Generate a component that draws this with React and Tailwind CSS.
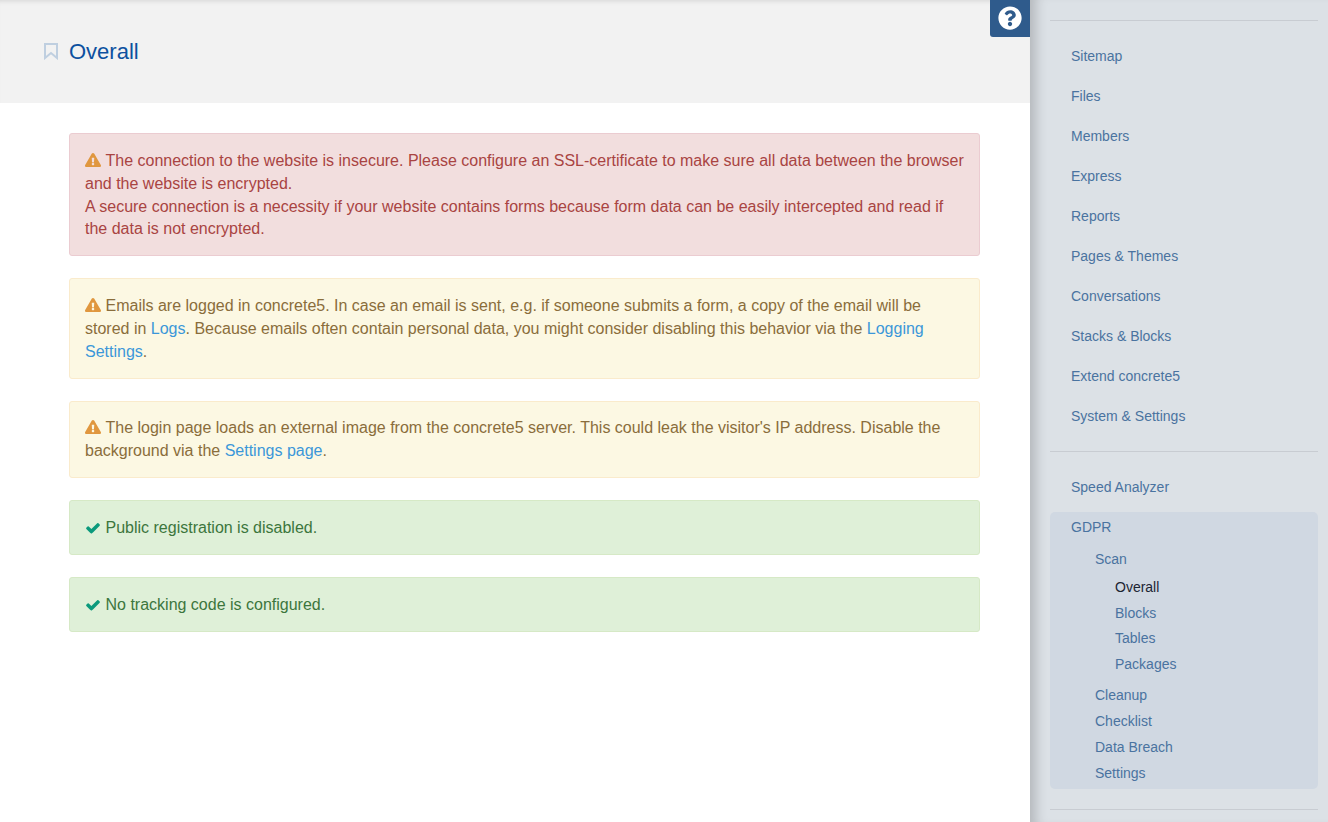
import React from "react";
import { FaExclamationTriangle, FaQuestionCircle } from "react-icons/fa";

const mainLinks = [
	"Sitemap",
	"Files",
	"Members",
	"Express",
	"Reports",
	"Pages & Themes",
	"Conversations",
	"Stacks & Blocks",
	"Extend concrete5",
	"System & Settings",
];

const linkClass = "text-[#4a73a0]";
const alertLink = "text-[#3b97d9]";

function Warn() {
	return <FaExclamationTriangle className="inline-block align-[-2px] text-[#e0973f] text-[16px] mr-[4.5px]" />;
}

function Check() {
	return (
		<svg width="16" height="16" viewBox="0 0 1792 1792" fill="#0b9a7c" className="inline-block align-[-3px] mr-[4.5px]">
			<path d="M1671 566q0 40-28 68l-724 724-136 136q-28 28-68 28t-68-28l-136-136-362-362q-28-28-28-68t28-68l136-136q28-28 68-28t68 28l294 295 656-657q28-28 68-28t68 28l136 136q28 28 28 68z" />
		</svg>
	);
}

function Alert({ classes, children }) {
	return <div className={`border rounded-[3px] pl-[15px] pr-[13px] pt-[15.8px] pb-[14.2px] mb-[21.8px] ${classes}`}>{children}</div>;
}

const danger = "bg-[#f2dede] border-[#ebccd1] text-[#a94442]";
const warning = "bg-[#fcf8e3] border-[#faebcc] text-[#8a6d3b]";
const success = "bg-[#dff0d8] border-[#d6e9c6] text-[#3c763d]";

export default function App() {
	return (
		<div className="relative flex h-[822px] overflow-hidden bg-white font-['Liberation_Sans',Arial,sans-serif]">
			<div className="w-[1030px] shrink-0">
				<div className="flex items-center h-[103px] bg-[#f2f2f2] pl-[44px] shadow-[inset_0_5px_5px_-4px_rgba(0,0,0,0.12)]">
					<svg width="14" height="17" viewBox="0 0 14 17" fill="none" stroke="#bfcfe0" strokeWidth="2" className="mr-[11px]">
						<path d="M1 1h12v14l-6-5-6 5z" />
					</svg>
					<h1 className="text-[22px] leading-[26px] text-[#0d51a0]">Overall</h1>
				</div>
				<div className="pt-[30px] pl-[69px] pr-[50px] text-[16px] leading-[22.857px]">
					<Alert classes={danger}>
						<Warn />
						The connection to the website is insecure. Please configure an SSL-certificate to make sure all data between the browser and the website is encrypted.
						<br />
						A secure connection is a necessity if your website contains forms because form data can be easily intercepted and read if the data is not encrypted.
					</Alert>
					<Alert classes={warning}>
						<Warn />
						Emails are logged in concrete5. In case an email is sent, e.g. if someone submits a form, a copy of the email will be stored in <span className={alertLink}>Logs</span>. Because emails often contain personal data, you might consider disabling this behavior via the <span className={alertLink}>Logging Settings</span>.
					</Alert>
					<Alert classes={warning}>
						<Warn />
						The login page loads an external image from the concrete5 server. This could leak the visitor's IP address. Disable the background via the <span className={alertLink}>Settings page</span>.
					</Alert>
					<Alert classes={success}>
						<Check />
						Public registration is disabled.
					</Alert>
					<Alert classes={success}>
						<Check />
						No tracking code is configured.
					</Alert>
				</div>
			</div>

			<div className="absolute top-0 left-[990px] w-[40px] h-[37px] flex items-center justify-center bg-[#2f5b8c] rounded-bl-[3px]">
				<FaQuestionCircle className="text-white text-[24px] -mt-[1px]" />
			</div>

			<div className="flex-1 bg-[#dce1e6] pl-[20px] pr-[10px] pt-[20px] text-[14px] leading-[20px] shadow-[inset_14px_0_12px_-8px_rgba(0,0,0,0.18)]">
				<div className="border-t border-[#c8ccd2]" />
				<div className="pl-[21px] pt-[25px] flex flex-col gap-[20px]">
					{mainLinks.map((item) => (
						<div key={item} className={linkClass}>{item}</div>
					))}
				</div>
				<div className="border-t border-[#c8ccd2] mt-[25px]" />
				<div className={`pl-[21px] pt-[25px] pb-[15px] ${linkClass}`}>Speed Analyzer</div>
				<div className={`bg-[#d0d8e2] rounded-[5px] h-[277px] pl-[21px] pt-[5px] ${linkClass}`}>
					<div>GDPR</div>
					<div className="pl-[24px] pt-[12px]">
						<div>Scan</div>
						<div className="pl-[20px] pt-[8px] flex flex-col gap-[5.7px]">
							<div className="text-[#1c2533]">Overall</div>
							<div>Blocks</div>
							<div>Tables</div>
							<div>Packages</div>
						</div>
						<div className="pt-[11px] flex flex-col gap-[6px]">
							<div>Cleanup</div>
							<div>Checklist</div>
							<div>Data Breach</div>
							<div>Settings</div>
						</div>
					</div>
				</div>
				<div className="border-t border-[#c8ccd2] mt-[20px]" />
			</div>
		</div>
	);
}
